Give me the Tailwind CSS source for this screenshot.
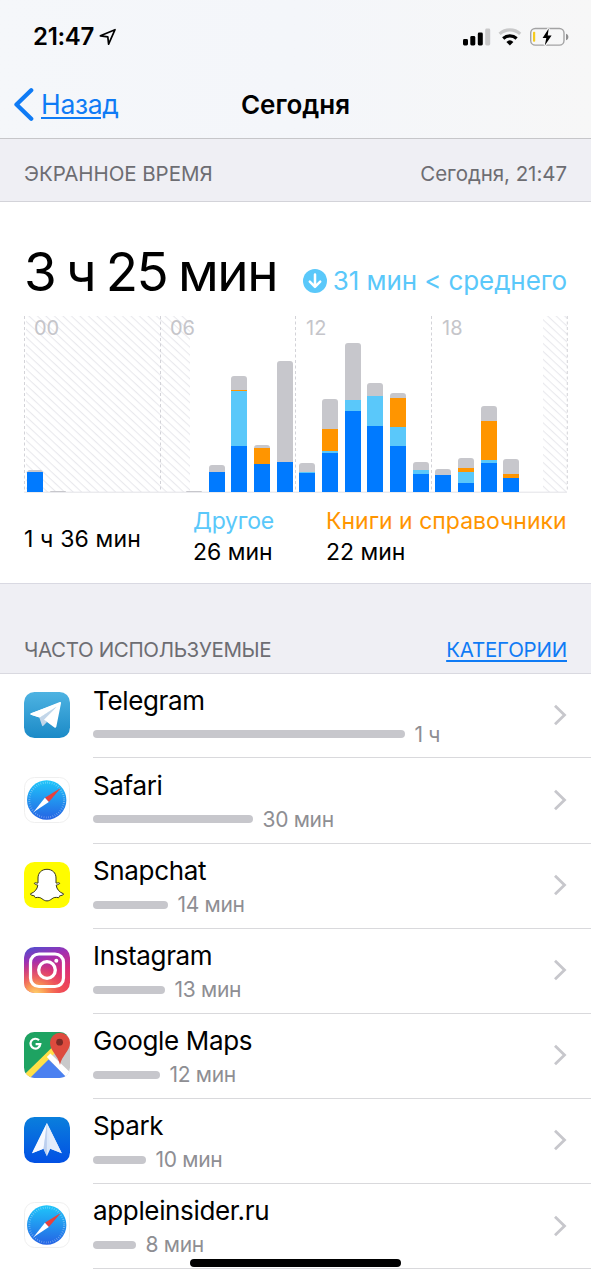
<!DOCTYPE html>
<html lang="ru">
<head>
<meta charset="utf-8">
<title>Экранное время</title>
<script src="https://cdn.jsdelivr.net/npm/@tailwindcss/browser@4"></script>
</head>
<body class="relative h-[1280px] w-[591px] overflow-hidden bg-white font-['Inter',sans-serif] text-black">

<!-- shared icon definitions -->
<svg class="absolute size-0" aria-hidden="true">
  <defs>
    <linearGradient id="sf" x1="0" y1="0" x2="0" y2="1"><stop offset="0" stop-color="#1fc6fa"/><stop offset="1" stop-color="#2563e4"/></linearGradient>
    <linearGradient id="tg" x1="0" y1="0" x2="0" y2="1"><stop offset="0" stop-color="#4eb3e2"/><stop offset="1" stop-color="#1b8ac7"/></linearGradient>
    <linearGradient id="sp" x1="0" y1="0" x2="0" y2="1"><stop offset="0" stop-color="#0a7fdc"/><stop offset="1" stop-color="#0250e4"/></linearGradient>
    <linearGradient id="ig" x1=".1" y1="0" x2=".4" y2="1"><stop offset="0" stop-color="#4f4fd0"/><stop offset=".3" stop-color="#a02fb2"/><stop offset=".65" stop-color="#d92e7a"/><stop offset="1" stop-color="#ee4458"/></linearGradient>
    <radialGradient id="ig2" cx=".25" cy="1.05" r=".75"><stop offset="0" stop-color="#ffdc72"/><stop offset=".3" stop-color="#fca454" stop-opacity=".9"/><stop offset="1" stop-color="#f0484f" stop-opacity="0"/></radialGradient>
    <clipPath id="sq"><rect width="46" height="46" rx="10.5"/></clipPath>
  </defs>
  <symbol id="i-safari" viewBox="0 0 46 46">
    <rect x=".5" y=".5" width="45" height="45" rx="10" fill="#fff" stroke="#efefef"/>
    <circle cx="22.7" cy="23" r="19.7" fill="url(#sf)"/>
    <circle cx="22.7" cy="23" r="17.4" fill="none" stroke="#fff" stroke-opacity=".45" stroke-width="2" stroke-dasharray=".6 1.68"/>
    <path d="M37 10.8 20.9 20.8 24.8 24.9Z" fill="#e8403c"/>
    <path d="M20.9 20.8 24.8 24.9 9.4 35.2Z" fill="#fff"/>
  </symbol>
  <symbol id="i-telegram" viewBox="0 0 46 46">
    <rect width="46" height="46" rx="10.5" fill="url(#tg)"/>
    <path d="M6.8 21.3Q5.800 22.300 7 22.700L15.300 25.600 36 10.800Z" fill="#fff"/>
    <path d="M15.300 25.600 18 33.500Q18.500 34.600 19.300 33.800L23 30 21 28 33 14Z" fill="#c3d6e9"/>
    <path d="M6.800 21.400 35.800 10.100Q37.300 9.700 37 11.200L32.300 34.800Q31.800 36.400 30.400 35.500L20 27.800 32.500 14.800 15.800 25.500 7 22.700Q5.800 22.200 6.800 21.400Z" fill="#fff"/>
  </symbol>
  <symbol id="i-snapchat" viewBox="0 0 46 46">
    <rect width="46" height="46" rx="10.5" fill="#fffc00"/>
    <path d="M23 7.300c-5.400 0-9 3.600-9 8.700v5c-1 .5-2.300-.7-3.500 0-.8.800 1.700 1.700 3.300 2.200-.5 4-3 6.900-7.300 8.600-.5 1.300 2.600 1.800 3.800 2 .4 1.100.4 1.900 1.600 1.800 2.500-.5 4.300-.2 6 1.100 1.900 1.400 3.200 2.200 5.100 2.200s3.200-.8 5.100-2.200c1.700-1.300 3.500-1.600 6-1.100 1.200.1 1.200-.7 1.600-1.800 1.200-.2 4.300-.7 3.800-2-4.300-1.700-6.800-4.600-7.300-8.600 1.600-.5 4.100-1.400 3.300-2.200-1.200-.7-2.500.5-3.500 0v-5c0-5.100-3.600-8.700-9-8.700Z" fill="#fff" stroke="#35351c" stroke-width="1" stroke-linejoin="round"/>
  </symbol>
  <symbol id="i-instagram" viewBox="0 0 46 46">
    <rect width="46" height="46" rx="10.5" fill="url(#ig)"/><rect width="46" height="46" rx="10.5" fill="url(#ig2)"/>
    <rect x="6.500" y="7" width="33" height="32.500" rx="8.500" fill="none" stroke="#fff" stroke-width="3.200"/>
    <circle cx="23" cy="23" r="8.300" fill="none" stroke="#fff" stroke-width="3.300"/><circle cx="32.300" cy="13.700" r="2" fill="#fff"/>
  </symbol>
  <symbol id="i-maps" viewBox="0 0 46 46">
    <g clip-path="url(#sq)">
      <path d="M0 0H46V46H0Z" fill="#c9c9ca"/>
      <path d="M0 0H46L0 43Z" fill="#1ea362"/>
      <path d="M23.500 26.500 44 46H4Z" fill="#4a80f0"/>
      <path d="M-2 45 28 15.500 32 20 5 47Z" fill="#ffe047"/>
      <path d="M22.800 25 26.400 21.400 50 44 45 48Z" fill="#fff"/>
    </g>
    <path d="M36 33C34.500 24 26 19 26 10.800a10 10 0 0 1 20 0C46 19 37.500 24 36 33Z" fill="#dd4b3e"/>
    <circle cx="35.600" cy="10.200" r="3.400" fill="#7b2a25"/>
    <path d="M15 8.300a4.900 4.900 0 1 0 1.300 3.900H11.600" fill="none" stroke="#fff" stroke-width="2.200"/>
  </symbol>
  <symbol id="i-spark" viewBox="0 0 46 46">
    <rect width="46" height="46" rx="10.5" fill="url(#sp)"/>
    <path d="M22.900 6 8 36.200 19.500 31.800 22.900 39.200 26.300 31.800 37.800 36.200Z" fill="#dbe8fa"/>
    <path d="M22.900 6 19.500 31.800 8 36.200Z" fill="#f6f9ff"/>
    <path d="M22.900 6 26.300 31.800 37.800 36.200Z" fill="#e3ecfb"/>
    <path d="M22.900 6 19.500 31.800 22.900 39.200Z" fill="#bccfee"/>
  </symbol>
</svg>

<header class="h-[139px] border-b border-[#c6c6c9] bg-linear-to-r from-[#f5f7fa] via-[#f4f6fa] to-[#f7f7f7]">
  <div class="flex h-[73px] items-center pl-[33px] pr-[22px]">
    <span class="text-[24px] leading-none font-semibold tracking-[-0.3px]">21:47</span>
    <svg class="ml-[5px] h-[18px] w-[18px]" viewBox="0 0 18 18" fill="none"><path d="M1.400 7.800 16 1.700 9.600 16.100 8.800 8.800Z" stroke="#000" stroke-width="1.700" stroke-linejoin="round"/></svg>
    <svg class="ml-auto h-[20px] w-[107px]" viewBox="462 26.500 107 20" fill="none">
      <rect x="463" y="38.500" width="5" height="6.500" rx="1.400" fill="#000"/>
      <rect x="470.300" y="35.500" width="5" height="9.500" rx="1.400" fill="#000"/>
      <rect x="477.800" y="32" width="5" height="13" rx="1.400" fill="#000"/>
      <rect x="485.200" y="28" width="5" height="17" rx="1.400" fill="#c9c9ca"/>
      <path d="M499.600 33.400a15.200 15.200 0 0 1 20.600 0" stroke="#c9c9ca" stroke-width="3.200"/>
      <path d="M503.200 38a10 10 0 0 1 13.400 0" stroke="#000" stroke-width="3.200"/>
      <path d="M509.900 45l-3.500-3.600a5.200 5.200 0 0 1 7 0Z" fill="#000"/>
      <rect x="530.700" y="28" width="33.300" height="16.600" rx="4.600" stroke="#a3a3a4" stroke-width="1.400"/>
      <path d="M566 33.300c3.200.8 3.200 5.600 0 6.400Z" fill="#8f8f90"/>
      <rect x="533" y="31.300" width="2.200" height="10" rx=".8" fill="#f5cb1e"/>
      <path d="M548.700 28 542.600 37.600h3.700l-1.500 7.300 6.800-9.900h-3.900Z" fill="#000" stroke="#f7f7f8" stroke-width="2.400" paint-order="stroke"/>
    </svg>
  </div>
  <div class="grid grid-cols-[1fr_auto_1fr] items-center pt-[15px]">
    <a class="flex items-center pl-[13px] text-[#0f7bf5]">
      <svg class="h-[33px] w-[21px]" viewBox="0 0 21 33" fill="none"><path d="M18.200 2.300 3.500 16.500 18.200 30.700" stroke="currentColor" stroke-width="4.300" stroke-linecap="round" stroke-linejoin="round"/></svg>
      <span class="ml-[7px] text-[26.5px] leading-[33px] tracking-[-0.3px] underline decoration-[1.5px] underline-offset-[3px]">Назад</span>
    </a>
    <h1 class="text-[26px] leading-[33px] font-semibold">Сегодня</h1>
    <span></span>
  </div>
</header>

<div class="flex h-[63px] items-center justify-between border-b border-[#d3d3d9] bg-[#efeff4] px-[24px] pt-[8px] text-[20.5px] leading-none text-[#6d6d72]">
  <span class="tracking-[-0.05px]">ЭКРАННОЕ ВРЕМЯ</span>
  <span class="tracking-[-0.05px]">Сегодня, 21:47</span>
</div>

<section class="h-[382px] border-b border-[#d9d9e2] px-[24px] pt-[38px]">
  <div class="flex h-[64px] justify-between whitespace-nowrap">
    <span class="text-[53px] leading-[64px] tracking-[-1.5px] [word-spacing:-2.7px]">3 ч 25 мин</span>
    <span class="flex items-center self-start pt-[25px] text-[26px] leading-[32px] tracking-[-0.1px] text-[#5ac8fa]">
      <svg class="mr-[6px] size-[24px]" viewBox="0 0 24 24" fill="none"><circle cx="12" cy="12" r="12" fill="#5ac8fa"/><path d="M12 5.600v12M6.800 12.600l5.200 5.200 5.200-5.200" stroke="#fff" stroke-width="2.500" stroke-linecap="round" stroke-linejoin="round"/></svg>31 мин &lt; среднего</span>
  </div>

  <div class="mt-[12px] grid h-[177px] w-[543px]">
    <svg class="col-start-1 row-start-1 h-[177px] w-[544px]" viewBox="0 0 544 177" fill="none">
      <defs><pattern id="hatch" width="6" height="5.800" patternUnits="userSpaceOnUse" patternTransform="rotate(43)"><path d="M0 2.500H6" stroke="#e9e9ed" stroke-width="1.100"/></pattern></defs>
      <path d="M2 0H166V176H2ZM519 0H543V176H519Z" fill="url(#hatch)"/>
      <path d="M.5 0V176M136.500 0V176M271.500 0V176M407.500 0V176M543.300 0V176" stroke="#d3d3d8" stroke-dasharray="3 2.500"/>
      <path d="M0 176.200H543" stroke="#e3e3e7"/>
    </svg>
    <div class="col-start-1 row-start-1 mr-[-10px] grid grid-cols-4 pl-[10px] pt-[2px] text-[20px] leading-[20px] text-[#c5c5ca]">
      <span>00</span><span>06</span><span>12</span><span>18</span>
    </div>
    <div id="bars" class="z-10 col-start-1 row-start-1 mb-[0.6px] grid grid-cols-24 items-end"></div>
  </div>

  <div class="mt-[13px] -ml-px grid grid-cols-[170px_133px_1fr] whitespace-nowrap text-[23px] leading-[31px]">
    <div class="self-center pt-[4px] tracking-[0.15px] pl-px">1 ч 36 мин</div>
    <div><div class="tracking-[-0.2px] text-[#5ac8fa]">Другое</div><div>26 мин</div></div>
    <div><div class="text-[#ff9500]">Книги и справочники</div><div>22 мин</div></div>
  </div>
</section>

<div class="flex h-[90px] items-end justify-between border-b border-[#d9d9e0] bg-[#efeff4] px-[24px] pb-[10px] text-[20.5px] leading-[26px] text-[#6d6d72]">
  <span class="tracking-[-0.35px]">ЧАСТО ИСПОЛЬЗУЕМЫЕ</span>
  <a class="tracking-[-0.2px] text-[#0f7bf5] underline decoration-[1.5px] underline-offset-[3px]">КАТЕГОРИИ</a>
</div>

<main id="apps" class="mt-[-0.7px]"></main>

<div class="absolute left-[190px] top-[1259px] h-[8px] w-[211px] rounded-full bg-black"></div>

<script>
// hourly segments in px, bottom to top: [blue, light blue, orange, grey]
const hours = {0:[20.5,0,0,1.5],1:[0,0,0,1],7:[0,0,0,1],8:[20,0,0,7.5],9:[46,55,1.5,14],10:[28.5,0,15.5,3.5],11:[30.5,0,0,100.5],
  12:[19.5,.8,0,9.5],13:[39,2,22.5,29.5],14:[81,11.5,0,57],15:[66.5,30,0,12.5],16:[46,19,29.5,5],17:[18.5,4,0,8],
  18:[17.5,0,0,6],19:[9.5,11,4,10],20:[29.5,3,38.5,15.5],21:[14,.5,4,15]};
const colors = ['bg-[#007aff]','bg-[#5ac8fa]','bg-[#ff9500]','bg-[#c7c7cc]'];
let bars = '';
for (let h = 0; h < 24; h++) {
  const seg = (hours[h] || []).map((v, i) => v ? `<div class="${colors[i]}" style="height:${v}px"></div>` : '').reverse().join('');
  bars += `<div class="mx-auto w-[16px] overflow-hidden rounded-t-[3px]">${seg}</div>`;
}
document.getElementById('bars').innerHTML = bars;

const apps = [['telegram','Telegram',312,'1 ч'],['safari','Safari',160,'30 мин'],['snapchat','Snapchat',75,'14 мин'],['instagram','Instagram',72,'13 мин'],
  ['maps','Google Maps',67,'12 мин'],['spark','Spark',53,'10 мин'],['safari','appleinsider.ru',43,'8 мин']];
document.getElementById('apps').innerHTML = apps.map(([id, name, w, t]) => `
  <div class="flex h-[85.1px] pl-[24px]">
    <svg class="mt-[18.5px] size-[46px] shrink-0" viewBox="0 0 46 46"><use href="#i-${id}" width="46" height="46"/></svg>
    <div class="ml-[23px] flex flex-1 border-b border-[#d9d9dc] pr-[24px]">
      <div class="flex-1 pt-[11.5px]">
        <div class="text-[26px] leading-[32px] tracking-[-0.35px]">${name}</div>
        <div class="flex h-[35px] items-center">
          <div class="h-[8px] rounded-full bg-[#c7c7cc]" style="width:${w}px"></div>
          <span class="ml-[9.5px] text-[21px] leading-none tracking-[-0.3px] text-[#8e8e93]">${t}</span>
        </div>
      </div>
      <svg class="mt-[30.7px] h-[22px] w-[14px]" viewBox="0 0 14 22" fill="none"><path d="M2 1.800 11.500 11 2 20.200" stroke="#c7c7cc" stroke-width="2.800"/></svg>
    </div>
  </div>`).join('');
</script>
</body>
</html>
